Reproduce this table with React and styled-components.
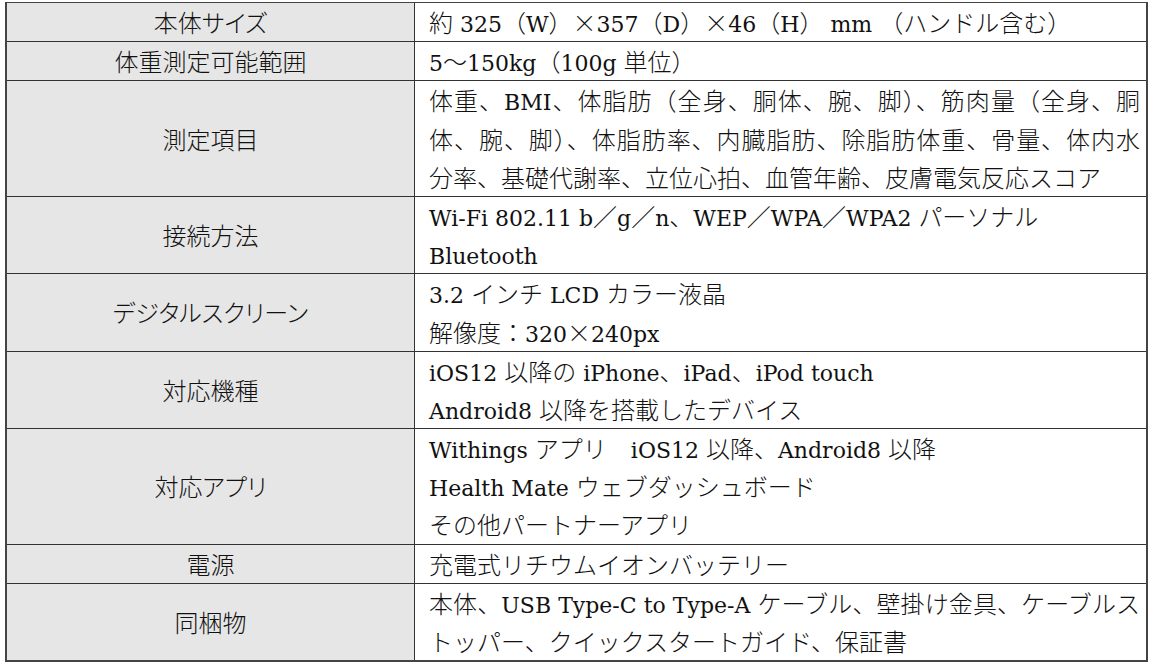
import React from 'react';
import styled, { createGlobalStyle } from 'styled-components';

const GlobalStyle = createGlobalStyle`
  html, body {
    margin: 0;
    padding: 0;
    background: #ffffff;
  }
`;

const Page = styled.div`
  padding: 2px 5px 0 5px;
`;

const SpecTable = styled.div`
  display: grid;
  grid-template-columns: 408px 1fr;
  width: 1143px;
  box-sizing: border-box;
  border: 2px solid #444;
  border-top-width: 1.5px;
  color: #111;
`;

const LabelCell = styled.div`
  display: flex;
  align-items: center;
  justify-content: center;
  background: #e6e6e6;
  border-right: 1px solid #333;
  border-bottom: ${props => (props.$last ? 'none' : '1px solid #333')};
  font-family: 'Noto Sans CJK JP', sans-serif;
  font-weight: 300;
  font-size: 24px;
  font-feature-settings: 'palt';
  line-height: 38.2px;
`;

const ValueCell = styled.div`
  display: flex;
  flex-direction: column;
  justify-content: center;
  padding: 0 6px 0 14px;
  border-bottom: ${props => (props.$last ? 'none' : '1px solid #333')};
  font-family: 'Noto Sans CJK JP', sans-serif;
  font-weight: 300;
  font-size: 24px;
  line-height: 38.2px;
`;

const Line = styled.div`
  height: 38.2px;
  white-space: nowrap;
  text-align: ${props => (props.$justify ? 'justify' : 'left')};
  text-align-last: ${props => (props.$justify ? 'justify' : 'left')};
`;

// 欧文部分（Century 風）
const Latin = styled.span`
  font-family: 'DejaVu Serif', 'Liberation Serif', serif;
  font-weight: 400;
  font-size: 22px;
  line-height: 1;
`;

const specs = [
  { label: '本体サイズ', lines: ['約 325（W）×357（D）×46（H） mm （ハンドル含む）'] },
  { label: '体重測定可能範囲', lines: ['5～150kg（100g 単位）'] },
  {
    label: '測定項目',
    lines: [
      '体重、BMI、体脂肪（全身、胴体、腕、脚）、筋肉量（全身、胴',
      '体、腕、脚）、体脂肪率、内臓脂肪、除脂肪体重、骨量、体内水',
      '分率、基礎代謝率、立位心拍、血管年齢、皮膚電気反応スコア',
    ],
    justify: 2,
  },
  {
    label: '接続方法',
    lines: ['Wi-Fi 802.11 b／g／n、WEP／WPA／WPA2 パーソナル', 'Bluetooth'],
  },
  { label: 'デジタルスクリーン', lines: ['3.2 インチ LCD カラー液晶', '解像度：320×240px'] },
  {
    label: '対応機種',
    lines: ['iOS12 以降の iPhone、iPad、iPod touch', 'Android8 以降を搭載したデバイス'],
  },
  {
    label: '対応アプリ',
    lines: [
      'Withings アプリ　iOS12 以降、Android8 以降',
      'Health Mate ウェブダッシュボード',
      'その他パートナーアプリ',
    ],
  },
  { label: '電源', lines: ['充電式リチウムイオンバッテリー'] },
  {
    label: '同梱物',
    lines: [
      '本体、USB Type-C to Type-A ケーブル、壁掛け金具、ケーブルス',
      'トッパー、クイックスタートガイド、保証書',
    ],
    justify: 1,
  },
];

// 英数字の連続を欧文フォントで描く
const renderRuns = text =>
  text.split(/([\u0020-\u007E]+)/).map((part, k) =>
    /^[\u0020-\u007E]+$/.test(part) ? <Latin key={k}>{part}</Latin> : part
  );

const App = () => {
  return (
    <Page>
      <GlobalStyle />
      <SpecTable>
        {specs.map((row, i) => {
          const last = i === specs.length - 1;
          return (
            <React.Fragment key={row.label}>
              <LabelCell $last={last}>{row.label}</LabelCell>
              <ValueCell $last={last}>
                {row.lines.map((text, j) => (
                  <Line key={j} $justify={row.justify && j < row.justify}>
                    {renderRuns(text)}
                  </Line>
                ))}
              </ValueCell>
            </React.Fragment>
          );
        })}
      </SpecTable>
    </Page>
  );
};

export default App;
